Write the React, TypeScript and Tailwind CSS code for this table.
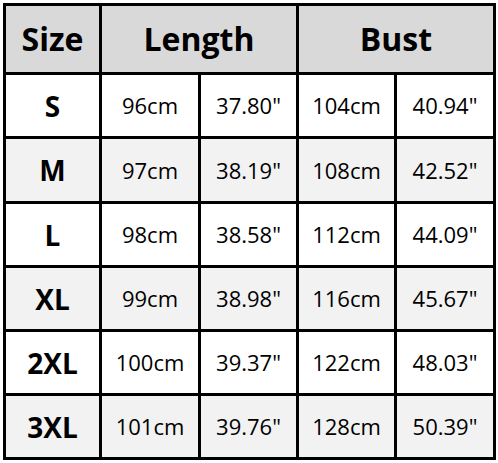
import React from "react";

const rows = [
  ["S", "96cm", '37.80"', "104cm", '40.94"'],
  ["M", "97cm", '38.19"', "108cm", '42.52"'],
  ["L", "98cm", '38.58"', "112cm", '44.09"'],
  ["XL", "99cm", '38.98"', "116cm", '45.67"'],
  ["2XL", "100cm", '39.37"', "122cm", '48.03"'],
  ["3XL", "101cm", '39.76"', "128cm", '50.39"'],
];

export default function App() {
  return (
    <div
      className="w-[498px] h-[463px] bg-white pt-[3px] pl-[3px]"
      style={{ fontFamily: '"Open Sans", "Noto Sans", sans-serif' }}
    >
      <div className="grid w-[493px] grid-cols-[93px_96px_95px_95px_96px] grid-rows-[66px_61px_62px_61px_61px_61px_61px] gap-[3px] bg-black p-[3px] text-black">
        <div className="flex items-center justify-center bg-[#d9d9d9] text-[32px] font-bold">
          Size
        </div>
        <div className="col-span-2 flex items-center justify-center bg-[#d9d9d9] text-[32px] font-bold">
          Length
        </div>
        <div className="col-span-2 flex items-center justify-center bg-[#d9d9d9] text-[32px] font-bold">
          Bust
        </div>
        {rows.map((r, i) => {
          const bg = i % 2 === 0 ? "bg-white" : "bg-[#f2f2f2]";
          return (
            <React.Fragment key={r[0]}>
              <div className={`flex items-center justify-center ${bg} text-[28px] font-bold`}>
                {r[0]}
              </div>
              {r.slice(1).map((c, j) => (
                <div
                  key={j}
                  className={`flex items-center justify-center ${bg} text-[22px]`}
                >
                  {c}
                </div>
              ))}
            </React.Fragment>
          );
        })}
      </div>
    </div>
  );
}
